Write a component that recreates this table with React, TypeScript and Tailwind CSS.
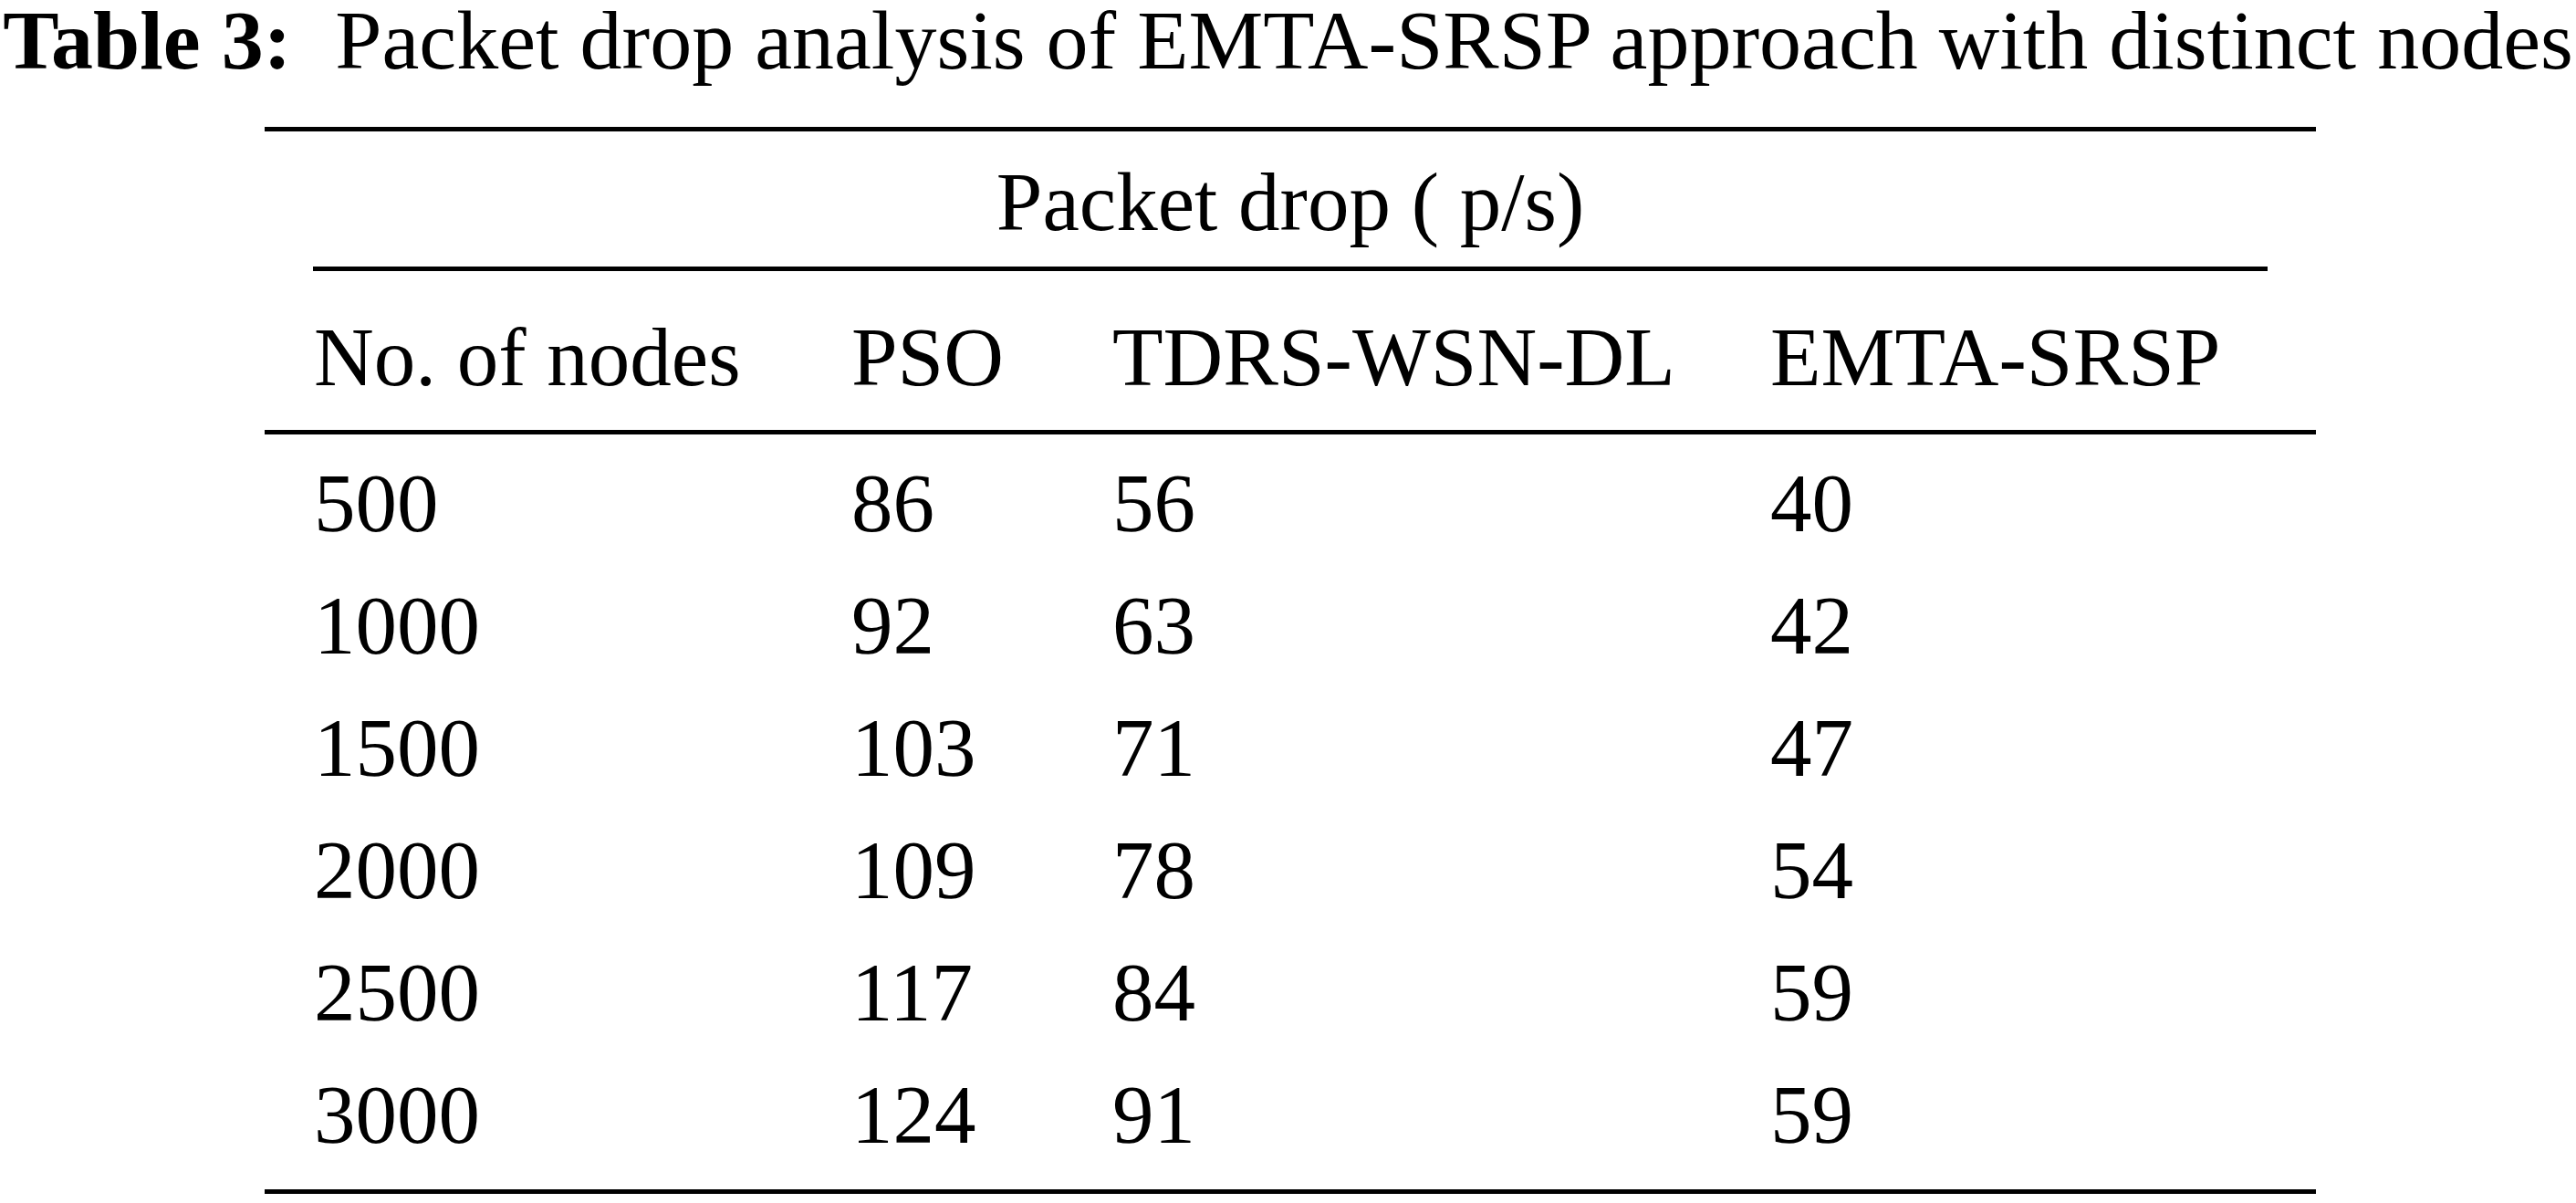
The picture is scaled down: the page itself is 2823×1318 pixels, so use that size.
const rows = [
  ["500", "86", "56", "40"],
  ["1000", "92", "63", "42"],
  ["1500", "103", "71", "47"],
  ["2000", "109", "78", "54"],
  ["2500", "117", "84", "59"],
  ["3000", "124", "91", "59"],
];

const cols = "grid grid-cols-[589px_286px_721px_1fr] pl-[54px]";

const App = () => {
  return (
    <div
      className="min-h-screen w-full bg-white text-black"
      style={{ fontFamily: '"Liberation Serif", "Times New Roman", serif' }}
    >
      <div className="h-[88px] whitespace-nowrap text-center text-[92px] leading-[88px]">
        <span className="font-bold">Table 3:</span>
        <span className="ml-[48px]">Packet drop analysis of EMTA-SRSP approach with distinct nodes</span>
      </div>

      <div className="ml-[290px] mt-[51px] w-[2248px] text-[91px]">
        <div className="h-[5px] bg-black" />
        <div className="h-[148px] pt-[7px] text-center leading-[141px]">Packet drop ( p/s)</div>
        <div className="mx-[53px] h-[5px] bg-black" />
        <div className={`${cols} h-[174px] pt-[15px] leading-[159px]`}>
          <div>No. of nodes</div>
          <div>PSO</div>
          <div>TDRS-WSN-DL</div>
          <div>EMTA-SRSP</div>
        </div>
        <div className="h-[5px] bg-black" />
        <div className="pb-[14px] pt-[9px]">
          {rows.map((r) => (
            <div key={r[0]} className={`${cols} h-[134px] leading-[134px]`}>
              {r.map((c, i) => (
                <div key={i}>{c}</div>
              ))}
            </div>
          ))}
        </div>
        <div className="h-[5px] bg-black" />
      </div>
    </div>
  );
};

export default App;
